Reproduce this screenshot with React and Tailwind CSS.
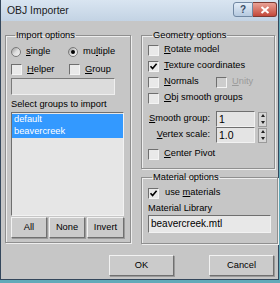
import React from "react";

function U({ children }) {
  return <span className="underline underline-offset-[1px]">{children}</span>;
}

function Check({ checked, disabled }) {
  return (
    <span
      className={`relative w-[11px] h-[11px] shrink-0 border border-t-[#6f6f6f] border-l-[#6f6f6f] border-b-[#f4f4f4] border-r-[#f4f4f4] ${
        disabled ? "bg-[#cdcdcd]" : "bg-[#e9e9e9]"
      }`}
    >
      {checked && (
        <svg viewBox="0 0 9 9" className="absolute left-0 top-0 w-[9px] h-[9px]">
          <path d="M1.5 4.2 L3.6 6.6 L7.6 1.8" fill="none" stroke="#000" strokeWidth="1.6" />
        </svg>
      )}
    </span>
  );
}

function Radio({ checked }) {
  return (
    <span className="flex items-center justify-center w-[10px] h-[10px] shrink-0 rounded-full border border-[#7a7a7a] bg-gradient-to-br from-[#9a9a9a] via-[#dedede] to-[#f2f2f2]">
      {checked && <span className="w-[4px] h-[4px] rounded-full bg-black" />}
    </span>
  );
}

function Btn({ children, className = "" }) {
  return (
    <button
      className={`flex items-center justify-center bg-[#cbcbcb] border border-t-[#f2f2f2] border-l-[#f2f2f2] border-b-[#707070] border-r-[#707070] shadow-[1px_1px_0_#9a9a9a] text-black ${className}`}
    >
      {children}
    </button>
  );
}

function Group({ title, className = "", children }) {
  return (
    <fieldset
      className={`border border-[#8f8f8f] shadow-[inset_1px_1px_0_#eeeeee,1px_1px_0_#eeeeee] ${className}`}
    >
      <legend className="ml-[4px] px-[1px] leading-[11px]">{title}</legend>
      {children}
    </fieldset>
  );
}

function Spin() {
  return (
    <div className="flex flex-col w-[9px] h-[15px] ml-[3px] bg-[#d6d6d6] border border-[#9a9a9a]">
      <div className="flex-1 flex items-center justify-center">
        <span className="w-0 h-0 border-l-[2px] border-r-[2px] border-b-[3px] border-l-transparent border-r-transparent border-b-[#222]" />
      </div>
      <div className="flex-1 flex items-center justify-center">
        <span className="w-0 h-0 border-l-[2px] border-r-[2px] border-t-[3px] border-l-transparent border-r-transparent border-t-[#222]" />
      </div>
    </div>
  );
}

export default function App() {
  return (
    <div
      className="w-[280px] h-[283px] bg-[#62aab9] overflow-hidden text-[9.3px] text-black"
      style={{ fontFamily: '"Liberation Sans", Arial, sans-serif' }}
    >
      <div className="w-[279px] h-[280px] flex flex-col border-l border-r border-b border-[#34475c] bg-[#c6c6c6]">
        {/* title bar */}
        <div className="h-[21px] flex items-start bg-gradient-to-b from-[#d9e5f1] to-[#c3d3e4]">
          <span className="mt-[4px] ml-[6px] text-[10.4px] leading-[13px] text-[#1a1a1a]">OBJ Importer</span>
          <div className="ml-auto mt-[2px] mr-[1px] flex">
            <div className="w-[20px] h-[15px] flex items-center justify-center rounded-l-[3px] border border-[#7188a3] bg-gradient-to-b from-[#e3edf8] to-[#b5c9df] text-[10px] font-bold leading-none text-[#3a4d66]">
              ?
            </div>
            <div className="w-[24px] h-[15px] flex items-center justify-center rounded-r-[3px] border border-l-0 border-[#7d3a32] bg-gradient-to-b from-[#e8a196] to-[#c3473a]">
              <svg viewBox="0 0 10 8" className="w-[10px] h-[8px]">
                <path d="M1.5 1 L8.5 7 M8.5 1 L1.5 7" stroke="#fff" strokeWidth="2" />
              </svg>
            </div>
          </div>
        </div>

        {/* body */}
        <div className="flex-1 flex flex-col pl-[4px] pr-[1px] pt-[9px]">
          <div className="flex gap-[10px]">
            <Group title="Import options" className="w-[126px] h-[213px] px-[5px] flex flex-col">
              <div className="flex items-center h-[13px] mt-[4px]">
                <Radio />
                <span className="ml-[5px] w-[42px]">
                  <U>s</U>ingle
                </span>
                <Radio checked />
                <span className="ml-[5px]">
                  mu<U>l</U>tiple
                </span>
              </div>
              <div className="flex items-center h-[13px] mt-[5px]">
                <Check />
                <span className="ml-[5px] w-[42px]">
                  <U>H</U>elper
                </span>
                <Check />
                <span className="ml-[5px]">
                  <U>G</U>roup
                </span>
              </div>
              <div className="mt-[2px] w-[104px] h-[17px] bg-[#dcdcdc] border border-t-[#7a7a7a] border-l-[#7a7a7a] border-b-[#efefef] border-r-[#efefef]" />
              <div className="mt-[3px] leading-[12px]">Select groups to import</div>
              <div className="mt-[2px] w-[113px] h-[104px] bg-[#e6e6e6] border border-t-[#6f6f6f] border-l-[#6f6f6f] border-b-[#f2f2f2] border-r-[#f2f2f2] pt-[1px]">
                <div className="bg-[#3399ff] text-white leading-[11.5px] pl-[2px] pb-[1px]">
                  <div>default</div>
                  <div>beavercreek</div>
                </div>
              </div>
              <div className="flex gap-[2px] mt-[1px]">
                <Btn className="w-[36px] h-[21px]">All</Btn>
                <Btn className="w-[36px] h-[21px]">None</Btn>
                <Btn className="w-[37px] h-[21px]">Invert</Btn>
              </div>
            </Group>

            <div className="flex flex-col w-[134px]">
              <Group title="Geometry options" className="h-[139px] pl-[6px] pr-[6px] flex flex-col">
                <div className="flex items-center h-[12px] mt-[3px]">
                  <Check />
                  <span className="ml-[5px]">
                    <U>R</U>otate model
                  </span>
                </div>
                <div className="flex items-center h-[12px] mt-[4px]">
                  <Check checked />
                  <span className="ml-[5px]">
                    <U>T</U>exture coordinates
                  </span>
                </div>
                <div className="flex items-center h-[12px] mt-[4px]">
                  <Check />
                  <span className="ml-[5px] w-[52px]">
                    <U>N</U>ormals
                  </span>
                  <Check disabled />
                  <span className="ml-[5px] text-[#9a9a9a]">
                    <U>U</U>nity
                  </span>
                </div>
                <div className="flex items-center h-[12px] mt-[4px]">
                  <Check />
                  <span className="ml-[5px]">
                    <U>O</U>bj smooth groups
                  </span>
                </div>
                <div className="flex items-center mt-[7px] h-[16px]">
                  <span className="w-[68px] text-right pr-[6px]">
                    <U>S</U>mooth group:
                  </span>
                  <div className="w-[39px] h-[16px] bg-[#e4e4e4] border border-t-[#6f6f6f] border-l-[#6f6f6f] border-b-[#f2f2f2] border-r-[#f2f2f2] pl-[2px] text-[10.5px] leading-[14px]">
                    1
                  </div>
                  <Spin />
                </div>
                <div className="flex items-center mt-[0px] h-[16px]">
                  <span className="w-[68px] text-right pr-[6px]">
                    <U>V</U>ertex scale:
                  </span>
                  <div className="w-[39px] h-[16px] bg-[#e4e4e4] border border-t-[#6f6f6f] border-l-[#6f6f6f] border-b-[#f2f2f2] border-r-[#f2f2f2] pl-[2px] text-[10.5px] leading-[14px]">
                    1.0
                  </div>
                  <Spin />
                </div>
                <div className="flex items-center h-[12px] mt-[5px]">
                  <Check />
                  <span className="ml-[5px]">
                    <U>C</U>enter Pivot
                  </span>
                </div>
              </Group>

              <Group title="Material options" className="mt-[3px] h-[72px] pl-[6px] pr-[6px] flex flex-col">
                <div className="flex items-center h-[12px] mt-[4px]">
                  <Check checked />
                  <span className="ml-[6px]">
                    use <U>m</U>aterials
                  </span>
                </div>
                <div className="mt-[3px] leading-[12px]">Material Library</div>
                <div className="mt-[1px] w-[123px] h-[18px] bg-[#e8e8e8] border border-t-[#6f6f6f] border-l-[#6f6f6f] border-b-[#f2f2f2] border-r-[#f2f2f2] pl-[2px] text-[10px] leading-[16px]">
                  beavercreek.mtl
                </div>
              </Group>
            </div>
          </div>

          <div className="flex justify-end gap-[35px] mt-[11px] pr-[3px]">
            <Btn className="w-[65px] h-[21px]">OK</Btn>
            <Btn className="w-[65px] h-[21px]">Cancel</Btn>
          </div>
        </div>
      </div>
    </div>
  );
}
